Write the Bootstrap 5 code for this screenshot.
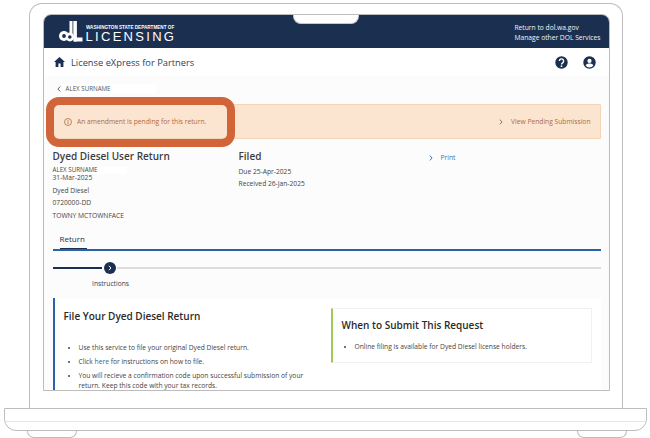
<!DOCTYPE html>
<html lang="en"><head><meta charset="utf-8"><title>License eXpress</title>
<link href="https://cdn.jsdelivr.net/npm/bootstrap@5.3.0/dist/css/bootstrap.min.css" rel="stylesheet">
<style>
html,body{margin:0;background:#fff;height:438px;overflow:hidden}
body{font-family:"Open Sans","Noto Sans",sans-serif;font-size:6.7px;line-height:1.3;color:#444}
.lap-lid{width:594px;height:405px;margin:3px 0 0 29px;border:1.5px solid #bcbcbc;border-bottom:0;border-radius:13px 13px 0 0;padding:10px 12.5px 0}
.lap-screen{position:relative;height:377px;width:567px;border:1.5px solid #bcbcbc;border-radius:8px 8px 0 0;overflow:hidden;background:#fcfcfc}
.lap-notch{position:absolute;left:249px;top:-1px;width:66px;height:10px;background:#fff;border:1px solid #c8c8c8;border-top:0;border-radius:0 0 8px 8px}
.lap-base{width:643px;height:22.5px;margin-left:4px;border:1.5px solid #bcbcbc;border-radius:0 0 12px 12px}
.base-line{height:12.5px;border-bottom:1px solid #e6e6e6}
.lap-feet{width:600px;margin-left:27px}
.lap-foot{width:50px;height:7.5px;border:1.2px solid #bcbcbc;border-top:0;border-radius:0 0 8px 8px}
.top-head{height:33px;background:#1b3050;color:#f2f4f7;padding-left:15px;padding-right:8px}
.logo-word{color:#fff;line-height:1;margin-left:3px;padding-top:4px}
.logo-top{font-family:"Liberation Sans",sans-serif;font-weight:700;font-size:6px;white-space:nowrap;height:6px;line-height:6px;transform:scaleX(.77);transform-origin:0 50%;width:90px}
.logo-main{font-family:"Liberation Sans",sans-serif;font-size:13px;letter-spacing:2.3px;height:12px;line-height:12px;margin-top:1px}
.top-links{font-size:6.7px;line-height:10px;padding-top:2px}
.app-bar{height:28px;background:#fff;padding:0 13px 0 10px;color:#1b3050}
.app-name{font-size:9.3px;color:#2c3f5a;margin:2px 0 0 6.5px}
.page-wrap{padding:0 8px 0 9px}
.crumb{height:28px;padding:0 0 2px 4px;font-size:6.2px;color:#555}
.mask-white{background:#fff}
.crumb .mask-white{width:94px;height:10px;padding-left:4px;margin-left:1px}
.notice{height:35px;background:#fbe5d0;border:1px solid #f3d5b5;border-radius:1px;padding:2px 9px 0 10px;color:#ae6b45}
.notice-left{gap:5.5px}
.callout{position:absolute;left:2.5px;top:82px;width:189px;height:50px;border:8px solid #d2643a;border-radius:13px}
.info-cols{height:91px;padding-top:10px}
.col-a{width:186px}.col-b{width:190px}
.ttl{font-size:10px;font-weight:600;color:#3d3d3d;line-height:14px}
.tiny-name{font-size:6.2px;line-height:6px;margin-top:4px;width:74px;height:7px}
.meta-line{line-height:7px;margin-bottom:5.6px}
.due-first{margin-top:5px}
.due-line{line-height:7px;margin-bottom:5px}
.print-lnk{padding-top:5px;color:#3b74ae}
.tab-row{height:19px;padding:2px 0 0 7px}
.tab-one{width:27px;height:100%;font-size:8px;font-weight:500;color:#1b3050;border-bottom:1px solid #1b3050;line-height:14px}
.rule-blue{height:2px;background:#2a64a8}
.step-wrap{height:47px;padding-top:11px}
.step-dark{width:49.5px;height:2px;background:#1b3050}
.step-dot{width:12px;height:12px;border-radius:50%;background:#1b3050;margin:0 1.5px;color:#fff;flex:none}
.step-light{height:2px;background:#dcdcdc}
.step-label{margin:4.5px 0 0 39px;width:38px;text-align:center;color:#2c3f5a;white-space:nowrap;line-height:9px}
.main-panel{background:#fff;height:100px;padding-top:10px}
.left-pane{width:278px;border-left:2px solid #2a64a8;height:94px;margin-top:-10px;padding:11px 14px 0 9px;flex:none}
.pane-h{font-size:10px;font-weight:600;color:#2a2a2a;line-height:14px;margin:0 0 20px}
.pane-list{margin:0;padding-left:15px}
.pane-list li{line-height:10.2px;margin-bottom:3.8px;color:#444}
.pane-list a{color:#2a64a8;text-decoration:none}
.right-pane{width:261px;height:55px;border:1px solid #f1f1f1;border-left:2px solid #9ccb57;padding:8.5px 8px 0 9px}
.rp-h{font-size:10px;font-weight:600;color:#2a2a2a;line-height:15px;margin:0 0 9px}
.right-pane .pane-list{padding-left:13px}
.chev{flex:none}
</style></head><body>
<div class="lap-lid">
 <div class="lap-screen">
  <div class="lap-notch"></div>
  <div class="top-head d-flex align-items-center justify-content-between">
   <div class="d-flex align-items-center">
    <svg width="24" height="21" viewBox="0 0 24 21"><g fill="#fff"><rect x="10.5" y="0" width="3" height="17"/><rect x="14.3" y="0" width="3.6" height="20.5"/><rect x="15" y="16.5" width="8.5" height="4"/><circle cx="5" cy="15" r="5"/><circle cx="10.8" cy="16" r="4.4"/></g><circle cx="5" cy="15" r="1.9" fill="#1b3050"/><circle cx="10.8" cy="16" r="1.8" fill="#1b3050"/></svg>
    <div class="logo-word"><div class="logo-top">WASHINGTON STATE DEPARTMENT OF</div><div class="logo-main">LICENSING</div></div>
   </div>
   <div class="top-links"><div>Return to dol.wa.gov</div><div>Manage other DOL Services</div></div>
  </div>
  <div class="app-bar d-flex align-items-center">
   <svg width="11" height="10" viewBox="0 0 11 10"><path fill="#1b3050" d="M5.5 0 0 5h1.6v5h2.8V6.6h2.2V10h2.8V5H11z"/></svg>
   <span class="app-name">License eXpress for Partners</span>
   <svg class="ms-auto" width="13" height="13" viewBox="0 0 13 13"><circle cx="6.5" cy="6.5" r="6.2" fill="#1b3050"/><path d="M4.4 5a2.1 2.1 0 1 1 3.2 1.8c-.8.5-1.1.9-1.1 1.6" fill="none" stroke="#fff" stroke-width="1.4"/><circle cx="6.5" cy="10.2" r=".9" fill="#fff"/></svg>
   <svg style="margin-left:15px" width="13" height="13" viewBox="0 0 13 13"><circle cx="6.5" cy="6.5" r="6.2" fill="#1b3050"/><circle cx="6.5" cy="4.9" r="2.1" fill="#fff"/><path d="M2.6 9.6c.7-1.4 2.2-2 3.9-2s3.2.6 3.9 2a5 5 0 0 1-7.8 0z" fill="#fff"/></svg>
  </div>
  <div class="page-wrap">
   <div class="crumb d-flex align-items-center">
    <svg class="chev" width="4" height="6" viewBox="0 0 4 6"><path d="M3.2.6.9 3l2.3 2.4" fill="none" stroke="#555" stroke-width=".9"/></svg>
    <div class="mask-white d-flex align-items-center">ALEX SURNAME</div>
   </div>
   <div class="notice d-flex align-items-center justify-content-between">
    <div class="notice-left d-flex align-items-center">
     <svg width="8" height="8" viewBox="0 0 8 8"><circle cx="4" cy="4" r="3.5" fill="none" stroke="#ae6b45" stroke-width=".8"/><path d="M4 3.4v2.5M4 2v.8" stroke="#ae6b45" stroke-width=".9"/></svg>
     <span>An amendment is pending for this return.</span>
    </div>
    <div class="d-flex align-items-center">
     <svg class="chev me-2" width="4" height="6" viewBox="0 0 4 6"><path d="M.8.6 3.1 3 .8 5.4" fill="none" stroke="#ae6b45" stroke-width="1"/></svg>
     <span>View Pending Submission</span>
    </div>
   </div>
   <div class="info-cols d-flex">
    <div class="col-a">
     <div class="ttl">Dyed Diesel User Return</div>
     <div class="tiny-name mask-white">ALEX SURNAME</div>
     <div class="meta-line">31-Mar-2025</div>
     <div class="meta-line">Dyed Diesel</div>
     <div class="meta-line">0720000-DD</div>
     <div class="meta-line">TOWNY MCTOWNFACE</div>
    </div>
    <div class="col-b">
     <div class="ttl">Filed</div>
     <div class="due-line due-first">Due 25-Apr-2025</div>
     <div class="due-line">Received 26-Jan-2025</div>
    </div>
    <div class="print-lnk d-flex align-items-start">
     <svg class="chev me-2" style="margin-top:1px" width="4" height="6" viewBox="0 0 4 6"><path d="M.8.6 3.1 3 .8 5.4" fill="none" stroke="#3b74ae" stroke-width="1"/></svg>
     <span>Print</span>
    </div>
   </div>
   <div class="tab-row"><div class="tab-one">Return</div></div>
   <div class="rule-blue"></div>
   <div class="step-wrap">
    <div class="d-flex align-items-center">
     <div class="step-dark"></div>
     <div class="step-dot d-flex align-items-center justify-content-center"><svg width="4" height="6" viewBox="0 0 4 6"><path d="M.9.8 3 3 .9 5.2" fill="none" stroke="#fff" stroke-width="1"/></svg></div>
     <div class="step-light flex-grow-1"></div>
    </div>
    <div class="step-label">Instructions</div>
   </div>
   <div class="main-panel d-flex">
    <div class="left-pane">
     <h2 class="pane-h">File Your Dyed Diesel Return</h2>
     <ul class="pane-list">
      <li>Use this service to file your original Dyed Diesel return.</li>
      <li>Click <a href="#">here</a> for instructions on how to file.</li>
      <li>You will recieve a confirmation code upon successful submission of your return. Keep this code with your tax records.</li>
     </ul>
    </div>
    <div class="right-pane">
     <h2 class="rp-h">When to Submit This Request</h2>
     <ul class="pane-list"><li>Online filing is available for Dyed Diesel license holders.</li></ul>
    </div>
   </div>
  </div>
  <div class="callout"></div>
 </div>
</div>
<div class="lap-base"><div class="base-line"></div></div>
<div class="lap-feet d-flex justify-content-between"><div class="lap-foot"></div><div class="lap-foot"></div></div>
</body></html>
